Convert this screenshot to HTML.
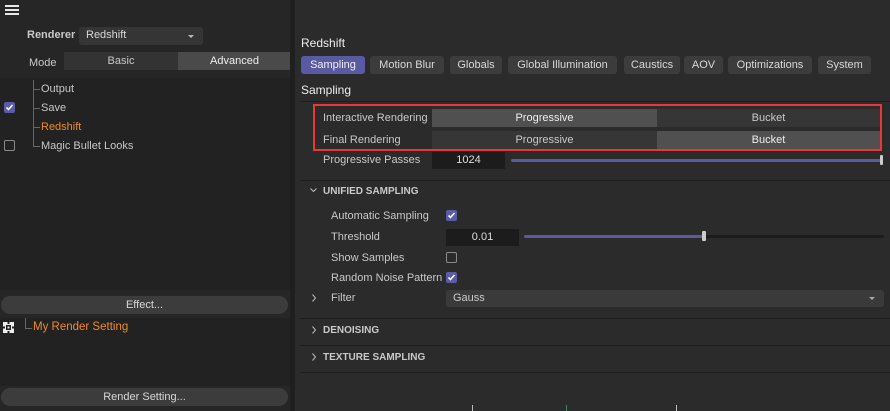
<!DOCTYPE html>
<html><head><style>
*{margin:0;padding:0;box-sizing:border-box}
body{width:890px;height:411px;background:#2b2b2b;font-family:"Liberation Sans",sans-serif;font-size:11px;color:#c8c8c8;position:relative;overflow:hidden}
.a{position:absolute;white-space:nowrap}
.btn{position:absolute;background:#3c3c3c;border-radius:3px;text-align:center;color:#d8d8d8}
.line{position:absolute;height:1px;background:#1e1e1e}
.cb{position:absolute;width:11px;height:11px;border-radius:2px;background:#5b5ba8}
.cb svg{position:absolute;left:1px;top:1px}
.cbe{position:absolute;width:11px;height:11px;border-radius:2px;border:1.5px solid #8a8a8a}
.hd{font-weight:bold;font-size:10px;color:#c8c8c8}
</style></head><body>
<!-- left panel -->
<div class="a" style="left:0;top:0;width:290px;height:411px;background:#262626"></div>
<div class="a" style="left:5px;top:5px;width:14px;height:2px;background:#e8e8e8"></div>
<div class="a" style="left:5px;top:9px;width:14px;height:2px;background:#e8e8e8"></div>
<div class="a" style="left:5px;top:13px;width:14px;height:2px;background:#e8e8e8"></div>
<div class="a" style="left:27px;top:29px;font-weight:bold;color:#c8c8c8">Renderer</div>
<div class="btn" style="left:79px;top:27px;width:124px;height:18px;background:#353535;text-align:left;padding:2px 7px">Redshift</div>
<div class="a" style="left:188px;top:35px;border-left:3px solid transparent;border-right:3px solid transparent;border-top:3px solid #bbb"></div>
<div class="a" style="left:29px;top:57px">Mode</div>
<div class="a" style="left:64px;top:52px;width:114px;height:18px;background:#333;text-align:center;padding-top:3px">Basic</div>
<div class="a" style="left:178px;top:52px;width:113px;height:18px;background:#4a4a4a;text-align:center;padding-top:3px;color:#eee">Advanced</div>
<div class="a" style="left:0;top:78px;width:290px;height:212px;background:#222"></div>
<div class="a" style="left:33px;top:80px;width:1px;height:66px;background:#666"></div>
<div class="a" style="left:33px;top:89px;width:7px;height:1px;background:#666"></div>
<div class="a" style="left:33px;top:108px;width:7px;height:1px;background:#666"></div>
<div class="a" style="left:33px;top:127px;width:7px;height:1px;background:#666"></div>
<div class="a" style="left:33px;top:146px;width:7px;height:1px;background:#666"></div>
<div class="a" style="left:41px;top:83px">Output</div>
<div class="cb" style="left:4px;top:102px"><svg width="9" height="9"><path d="M1.5 4.5l2 2 4-4.5" stroke="#fff" stroke-width="1.6" fill="none"/></svg></div>
<div class="a" style="left:41px;top:102px">Save</div>
<div class="a" style="left:41px;top:121px;color:#f0892a">Redshift</div>
<div class="cbe" style="left:4px;top:140px"></div>
<div class="a" style="left:41px;top:140px">Magic Bullet Looks</div>
<div class="btn" style="left:1px;top:296px;width:287px;height:18px;border-radius:9px;padding-top:3px">Effect...</div>
<div class="a" style="left:0;top:318px;width:290px;height:68px;background:#222"></div>
<svg class="a" style="left:3px;top:322px" width="11" height="11"><rect x="0" y="0" width="11" height="11" fill="#eee"/><rect x="3" y="3" width="5" height="5" fill="#222"/><rect x="4.5" y="0" width="2" height="2" fill="#222"/><rect x="4.5" y="9" width="2" height="2" fill="#222"/><rect x="0" y="4.5" width="2" height="2" fill="#222"/><rect x="9" y="4.5" width="2" height="2" fill="#222"/><rect x="4.5" y="4.5" width="2" height="2" fill="#eee"/></svg>
<div class="a" style="left:25px;top:318px;width:1px;height:10px;background:#666"></div>
<div class="a" style="left:25px;top:328px;width:7px;height:1px;background:#666"></div>
<div class="a" style="left:33px;top:321px;color:#f0892a;font-size:11.5px">My Render Setting</div>
<div class="btn" style="left:1px;top:388px;width:287px;height:18px;border-radius:9px;padding-top:3px">Render Setting...</div>
<div class="a" style="left:290px;top:0;width:5px;height:411px;background:#1f1f1f"></div>
<!-- right -->
<div class="a" style="left:301px;top:36px;color:#eee;font-size:12px">Redshift</div>
<div class="btn" style="left:301px;top:56px;width:64px;height:18px;background:#5a5aa3;padding-top:3px;color:#eee">Sampling</div>
<div class="btn" style="left:370px;top:56px;width:74px;height:18px;padding-top:3px">Motion Blur</div>
<div class="btn" style="left:450px;top:56px;width:52px;height:18px;padding-top:3px">Globals</div>
<div class="btn" style="left:508px;top:56px;width:109px;height:18px;padding-top:3px">Global Illumination</div>
<div class="btn" style="left:624px;top:56px;width:56px;height:18px;padding-top:3px">Caustics</div>
<div class="btn" style="left:684px;top:56px;width:39px;height:18px;padding-top:3px">AOV</div>
<div class="btn" style="left:728px;top:56px;width:84px;height:18px;padding-top:3px">Optimizations</div>
<div class="btn" style="left:818px;top:56px;width:53px;height:18px;padding-top:3px">System</div>
<div class="a" style="left:301px;top:83px;color:#eee;font-size:12px">Sampling</div>
<div class="line" style="left:300px;top:101px;width:590px"></div>
<div class="a" style="left:432px;top:109px;width:225px;height:18px;background:#505050;text-align:center;padding-top:3px;color:#eee">Progressive</div>
<div class="a" style="left:657px;top:109px;width:223px;height:18px;background:#363636;text-align:center;padding-top:3px">Bucket</div>
<div class="a" style="left:432px;top:131px;width:225px;height:18px;background:#363636;text-align:center;padding-top:3px">Progressive</div>
<div class="a" style="left:657px;top:131px;width:223px;height:18px;background:#505050;text-align:center;padding-top:3px;color:#eee">Bucket</div>
<div class="a" style="left:323px;top:112px">Interactive Rendering</div>
<div class="a" style="left:323px;top:134px">Final Rendering</div>
<div class="a" style="left:313px;top:104px;width:569px;height:47px;border:2px solid #e8383b"></div>
<div class="a" style="left:323px;top:154px">Progressive Passes</div>
<div class="a" style="left:432px;top:152px;width:73px;height:17px;background:#1c1c1c;text-align:center;padding-top:2px;color:#ddd">1024</div>
<div class="a" style="left:511px;top:159px;width:370px;height:3px;background:#5a5aa3;border-radius:2px"></div>
<div class="a" style="left:880px;top:155px;width:3px;height:10px;background:#ccc;border-radius:1px"></div>
<div class="line" style="left:300px;top:180px;width:590px"></div>
<svg class="a" style="left:310px;top:188px" width="7" height="5"><path d="M0.5 0.5l3 3 3-3" stroke="#bbb" fill="none"/></svg>
<div class="a hd" style="left:323px;top:186px">UNIFIED SAMPLING</div>
<div class="a" style="left:331px;top:210px">Automatic Sampling</div>
<div class="cb" style="left:446px;top:210px"><svg width="9" height="9"><path d="M1.5 4.5l2 2 4-4.5" stroke="#fff" stroke-width="1.6" fill="none"/></svg></div>
<div class="a" style="left:331px;top:231px">Threshold</div>
<div class="a" style="left:446px;top:229px;width:73px;height:17px;background:#1c1c1c;text-align:center;padding-top:2px;color:#ddd">0.01</div>
<div class="a" style="left:524px;top:235px;width:360px;height:3px;background:#1c1c1c;border-radius:2px"></div>
<div class="a" style="left:524px;top:235px;width:180px;height:3px;background:#5a5aa3;border-radius:2px"></div>
<div class="a" style="left:702px;top:231px;width:4px;height:10px;background:#ccc;border-radius:1px"></div>
<div class="a" style="left:331px;top:252px">Show Samples</div>
<div class="cbe" style="left:446px;top:252px"></div>
<div class="a" style="left:331px;top:272px">Random Noise Pattern</div>
<div class="cb" style="left:446px;top:272px"><svg width="9" height="9"><path d="M1.5 4.5l2 2 4-4.5" stroke="#fff" stroke-width="1.6" fill="none"/></svg></div>
<svg class="a" style="left:312px;top:294px" width="5" height="8"><path d="M0.5 0.5l3 3.5-3 3.5" stroke="#bbb" fill="none"/></svg>
<div class="a" style="left:331px;top:292px">Filter</div>
<div class="a" style="left:446px;top:290px;width:438px;height:17px;background:#3a3a3a;border-radius:3px;padding:2px 7px">Gauss</div>
<div class="a" style="left:869px;top:297px;border-left:3px solid transparent;border-right:3px solid transparent;border-top:3px solid #aaa"></div>
<div class="line" style="left:300px;top:318px;width:590px"></div>
<svg class="a" style="left:312px;top:326px" width="5" height="8"><path d="M0.5 0.5l3 3.5-3 3.5" stroke="#bbb" fill="none"/></svg>
<div class="a hd" style="left:323px;top:325px">DENOISING</div>
<div class="line" style="left:300px;top:345px;width:590px"></div>
<svg class="a" style="left:312px;top:353px" width="5" height="8"><path d="M0.5 0.5l3 3.5-3 3.5" stroke="#bbb" fill="none"/></svg>
<div class="a hd" style="left:323px;top:352px">TEXTURE SAMPLING</div>
<div class="line" style="left:300px;top:372px;width:590px"></div>
<div class="a" style="left:472px;top:405px;width:1px;height:6px;background:#bbb"></div>
<div class="a" style="left:566px;top:405px;width:1px;height:6px;background:#3a8a5a"></div>
<div class="a" style="left:676px;top:405px;width:1px;height:6px;background:#bbb"></div>
</body></html>
